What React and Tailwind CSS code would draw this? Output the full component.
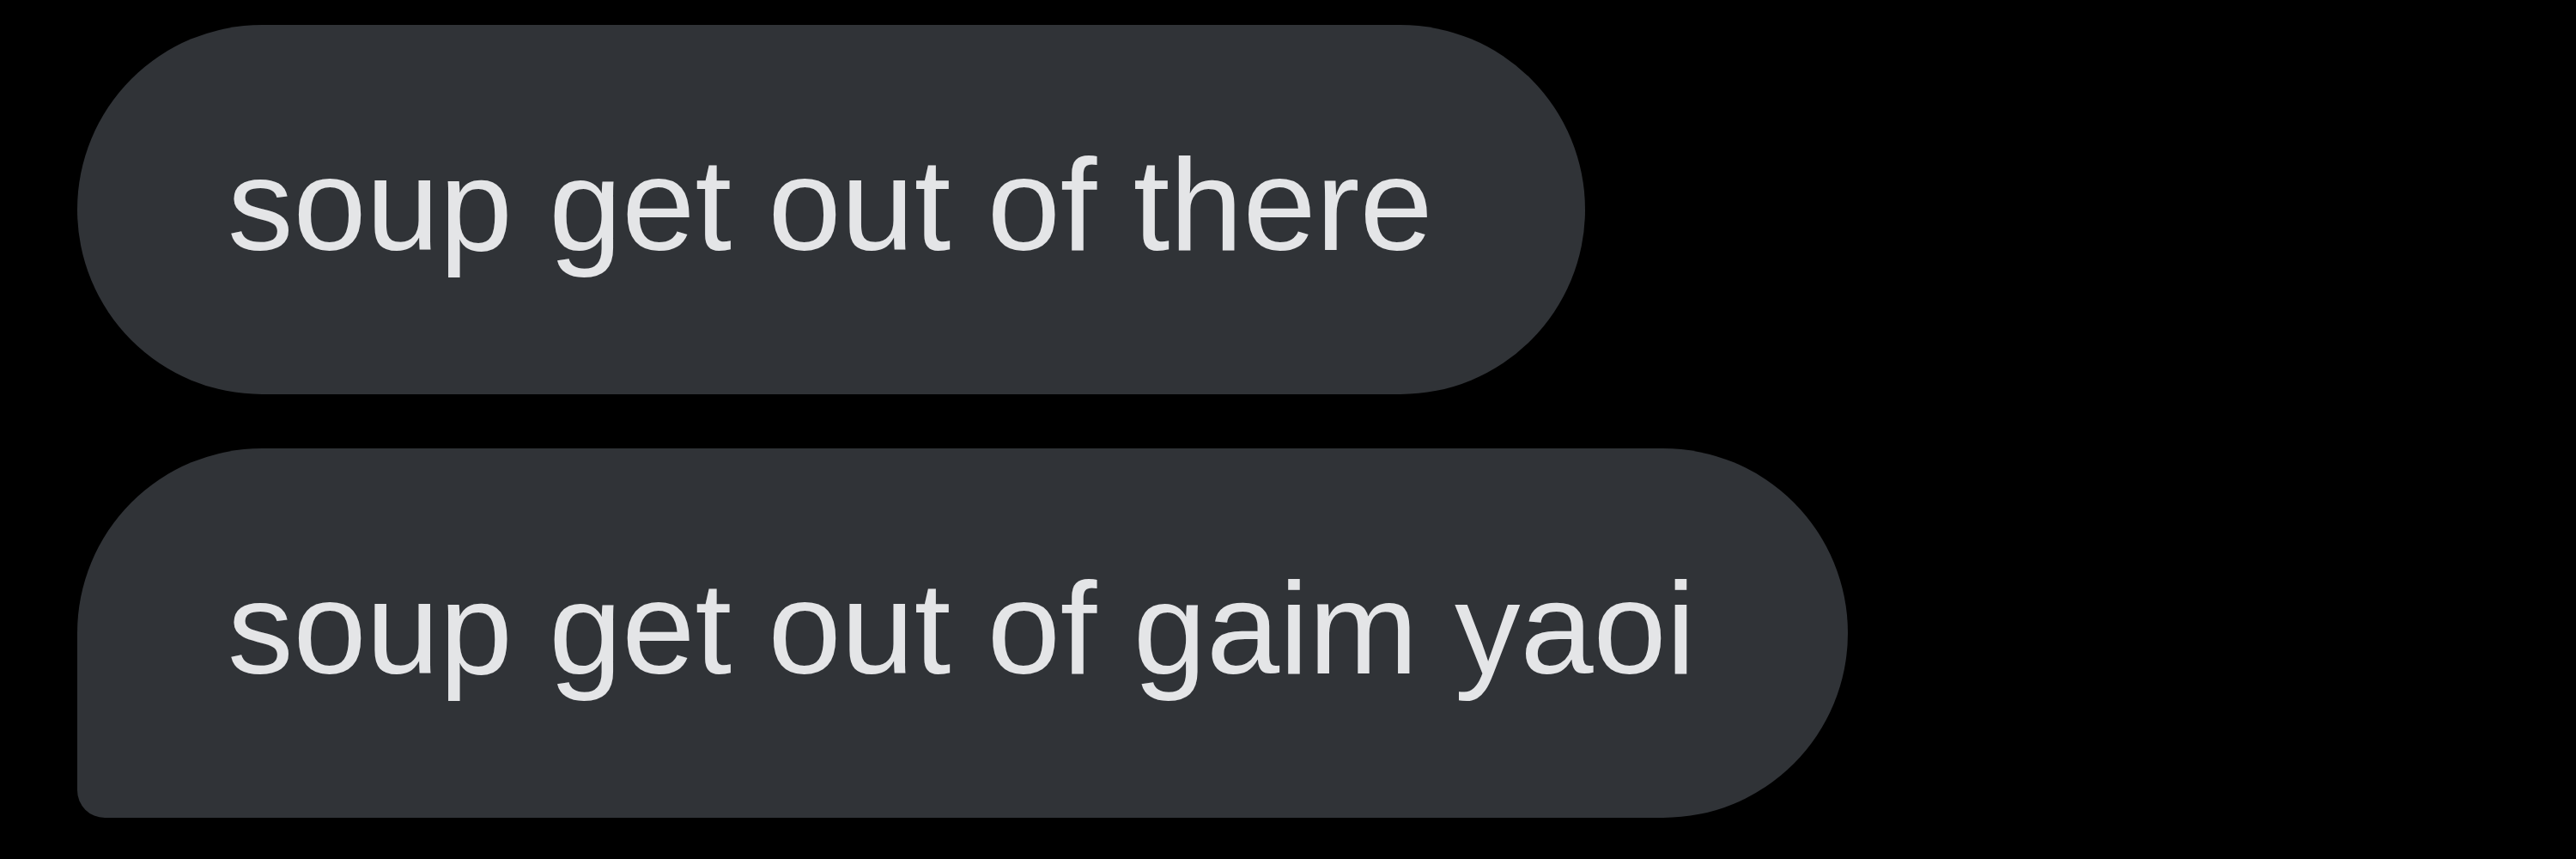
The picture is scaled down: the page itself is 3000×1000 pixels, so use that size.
const messages = [
  { text: 'soup get out of there', corner: 'rounded-[215px]' },
  { text: 'soup get out of gaim yaoi', corner: 'rounded-[215px] rounded-bl-[32px]' },
]

function Bubble({ text, corner }) {
  return (
    <div className={`flex h-[430px] items-center bg-[#303337] pb-[14px] pl-[175px] pr-[177px] ${corner}`}>
      <span
        className="whitespace-nowrap text-[153px] leading-none text-[#e4e5e7]"
        style={{ fontFamily: '"Liberation Sans", Arial, sans-serif' }}
      >
        {text}
      </span>
    </div>
  )
}

export default function App() {
  return (
    <div className="flex h-[1000px] w-[3000px] flex-col items-start gap-[63px] bg-black pl-[90px] pt-[29px]">
      {messages.map((m) => (
        <Bubble key={m.text} {...m} />
      ))}
    </div>
  )
}
